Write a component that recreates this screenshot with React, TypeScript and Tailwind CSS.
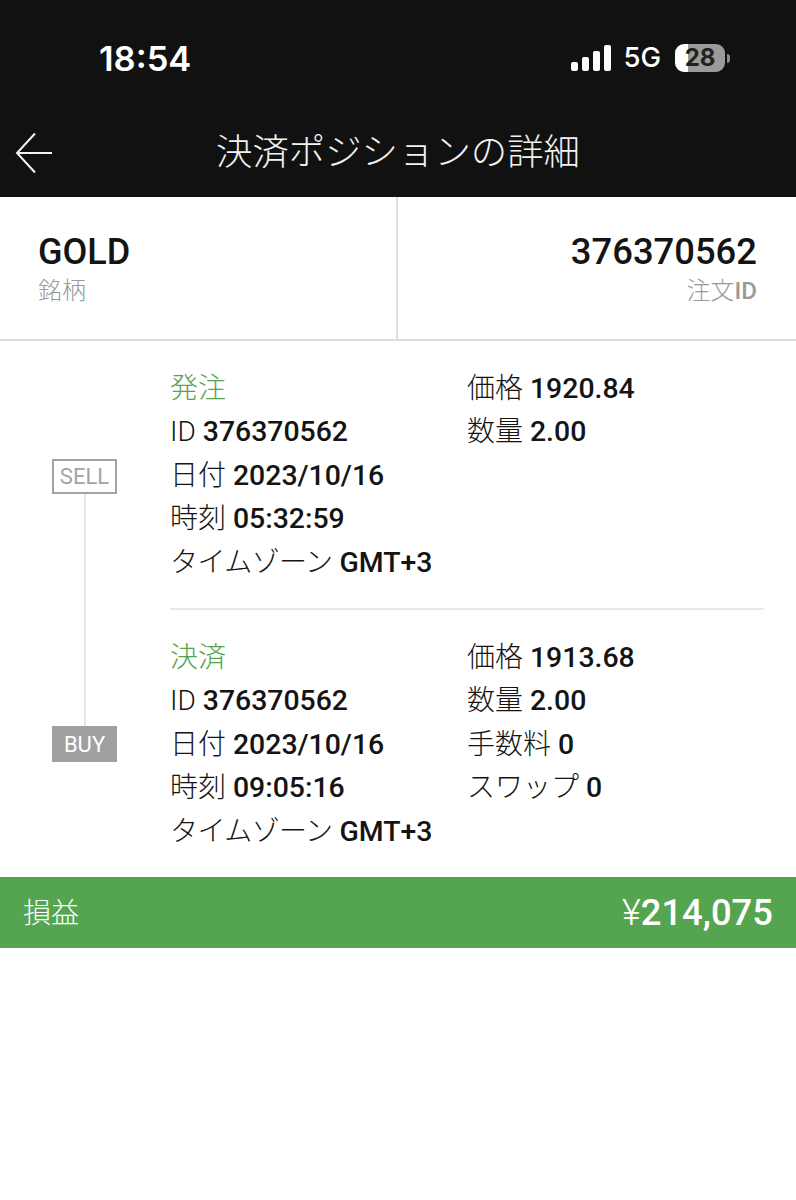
import type { ReactNode } from 'react';

const jp = "font-['Roboto','Noto_Sans_CJK_JP',sans-serif]";

const Row = ({ label, value }: { label: string; value: string }) => (
  <div className="whitespace-nowrap">
    <span className={label === 'タイムゾーン' ? 'font-light tracking-[-0.6px]' : 'font-light'}>{label}</span>{' '}
    <span className="text-[28.4px] font-medium">{value}</span>
  </div>
);

const Section = ({
  title,
  left,
  right,
  children,
}: {
  title: string;
  left: [string, string][];
  right: [string, string][];
  children?: ReactNode;
}) => (
  <div className="grid grid-cols-[297px_297px] pt-[26px] pb-[24px] text-[28px] leading-[43.4px] text-[#141414]">
    <div>
      <div className="font-light text-[#55a550]">{title}</div>
      {left.map(([l, v]) => (
        <Row key={l} label={l} value={v} />
      ))}
    </div>
    <div>
      {right.map(([l, v]) => (
        <Row key={l} label={l} value={v} />
      ))}
    </div>
    {children}
  </div>
);

const BackArrow = () => (
  <svg width="38" height="42" viewBox="0 0 38 42" fill="none" stroke="#f2f2f2" strokeWidth="2">
    <path d="M20 1.5 L2 21 L20 40.5" />
    <path d="M2 21 H37" />
  </svg>
);

const Signal = () => (
  <svg width="40" height="26" viewBox="0 0 40 26" fill="#fff">
    <rect x="0" y="17" width="7" height="9" rx="2" />
    <rect x="11" y="12" width="7" height="14" rx="2" />
    <rect x="22" y="6" width="7" height="20" rx="2" />
    <rect x="33" y="0" width="7" height="26" rx="2" />
  </svg>
);

export default function App() {
  return (
    <div className={`min-h-[1200px] bg-white ${jp}`}>
      {/* Header */}
      <header className="bg-[#111111] text-white">
        <div className="flex h-[116px] items-center justify-between pl-[99px] pr-[66px]">
          <span className="mt-[2px] font-['Inter',sans-serif] text-[34.5px] font-semibold">18:54</span>
          <div className="flex items-center">
            <Signal />
            <span className="ml-[12px] font-['Inter',sans-serif] text-[27.5px] font-medium">5G</span>
            <div className="ml-[14px] flex h-[28px] w-[50px] items-center justify-center rounded-[9px] bg-[linear-gradient(90deg,#ffffff_26%,#9b9b9b_26%)] font-['Inter',sans-serif] text-[24px] font-bold text-[#222]">
              28
            </div>
            <div className="ml-[2px] h-[9px] w-[3px] rounded-r-full bg-[#8a8a8a]" />
          </div>
        </div>
        <div className="grid h-[81px] grid-cols-[1fr_auto_1fr] items-center pb-[7px]">
          <div className="pl-[15px]">
            <BackArrow />
          </div>
          <h1 className="text-[36.4px] font-light leading-none text-[#f2f2f2]">決済ポジションの詳細</h1>
          <div />
        </div>
      </header>

      {/* Symbol / order id */}
      <div className="grid h-[144px] grid-cols-[398px_398px] border-b-2 border-[#dcdcdc]">
        <div className="flex flex-col justify-center border-r-2 border-[#dcdcdc] pl-[38px] pt-[2px]">
          <div className="text-[36px] font-medium leading-[44px] text-[#141414]">GOLD</div>
          <div className="text-[24px] font-light leading-[34px] text-[#9a9a9a]">銘柄</div>
        </div>
        <div className="flex flex-col items-end justify-center pr-[39px] pt-[2px]">
          <div className="text-[36.4px] font-medium leading-[44px] text-[#141414]">376370562</div>
          <div className="text-[24px] font-light leading-[34px] text-[#9a9a9a]">
            注文<span className="font-medium">ID</span>
          </div>
        </div>
      </div>

      {/* Trades */}
      <div className="flex">
        <div className="flex w-[170px] flex-col items-center pb-[115px] pr-[1px] pt-[118px]">
          <div className="flex h-[35px] w-[65px] items-center justify-center border-2 border-[#a3a3a3] text-[22px] text-[#a3a3a3]">
            SELL
          </div>
          <div className="w-[2px] flex-1 bg-[#e6e6e6]" />
          <div className="flex h-[36px] w-[65px] items-center justify-center bg-[#a0a0a0] text-[22px] text-white">
            BUY
          </div>
        </div>
        <div className="w-[594px]">
          <Section
            title="発注"
            left={[
              ['ID', '376370562'],
              ['日付', '2023/10/16'],
              ['時刻', '05:32:59'],
              ['タイムゾーン', 'GMT+3'],
            ]}
            right={[
              ['価格', '1920.84'],
              ['数量', '2.00'],
            ]}
          />
          <div className="h-[2px] bg-[#e8e8e8]" />
          <Section
            title="決済"
            left={[
              ['ID', '376370562'],
              ['日付', '2023/10/16'],
              ['時刻', '09:05:16'],
              ['タイムゾーン', 'GMT+3'],
            ]}
            right={[
              ['価格', '1913.68'],
              ['数量', '2.00'],
              ['手数料', '0'],
              ['スワップ', '0'],
            ]}
          />
        </div>
      </div>

      {/* Profit */}
      <div className="flex h-[71px] items-center justify-between bg-[#55a550] pl-[23px] pr-[23px] pt-[2px] text-white">
        <span className="text-[28px] font-light">損益</span>
        <span className="text-[36.4px] font-medium">
          <span className="font-light">¥</span>214,075
        </span>
      </div>
    </div>
  );
}
